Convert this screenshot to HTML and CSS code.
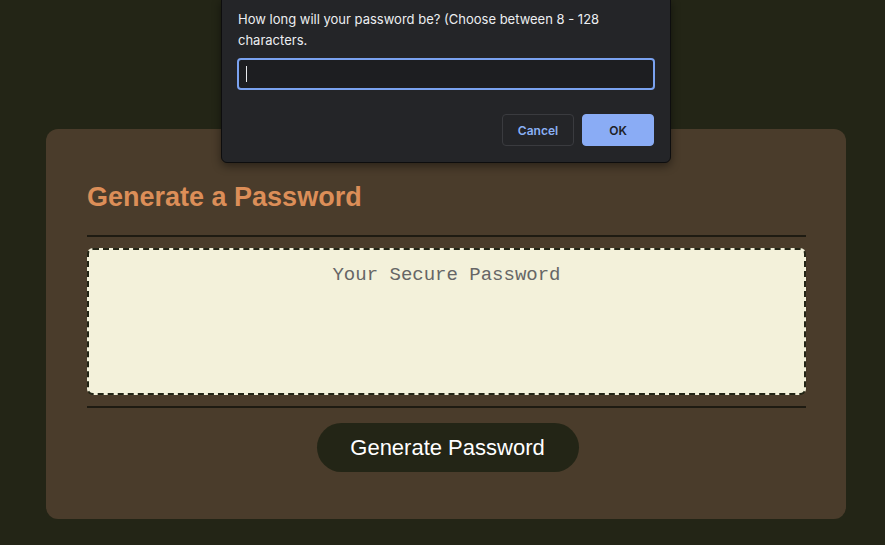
FILE: index.html
```html
<!DOCTYPE html>
<html lang="en">
<head>
<meta charset="utf-8">
<title>Password Generator</title>
<link rel="stylesheet" href="styles.css">
</head>
<body>
  <main class="page">
    <section class="card">
      <h2 class="card-title">Generate a Password</h2>
      <div class="card-body">
        <textarea class="password" readonly placeholder="Your Secure Password" aria-label="Generated Password"></textarea>
      </div>
      <div class="card-footer">
        <button class="btn-generate" type="button">Generate Password</button>
      </div>
    </section>
  </main>

  <div class="dialog" role="dialog">
    <p class="dialog-msg">How long will your password be? (Choose between 8 - 128 characters.</p>
    <div class="dialog-input"><span class="caret"></span></div>
    <div class="dialog-actions">
      <button class="dlg-btn dlg-cancel" type="button">Cancel</button>
      <button class="dlg-btn dlg-ok" type="button">OK</button>
    </div>
  </div>
</body>
</html>
```

FILE: styles.css
```css
* { box-sizing: border-box; }

html, body {
  margin: 0;
  padding: 0;
  background: #232516;
  height: 100%;
}

body {
  font-family: "Liberation Sans", Arial, sans-serif;
  overflow: hidden;
}

.page {
  padding: 129px 0 0 46px;
}

.card {
  width: 800px;
  background: #4a3c2b;
  border-radius: 12px;
  padding: 52px 40px 47px 41px;
}

.card-title {
  margin: 0 0 22px;
  font-size: 27px;
  line-height: 32px;
  font-weight: 700;
  color: #dc8e58;
}

.card-body {
  border-top: 2px solid #1e1b12;
  border-bottom: 2px solid #1e1b12;
  padding: 11px 0 11px;
}

.password {
  display: block;
  width: 100%;
  height: 147px;
  resize: none;
  background: #f3f1da;
  border: 2px dashed #232516;
  border-radius: 6px;
  padding: 14px 10px;
  font-family: "Liberation Mono", "Courier New", monospace;
  font-size: 19px;
  line-height: 22px;
  text-align: center;
  color: #555;
  outline: none;
}

.password::placeholder {
  color: #666;
  opacity: 1;
}

.card-footer {
  display: flex;
  justify-content: center;
  padding-top: 15px;
  padding-left: 2px;
}

.btn-generate {
  width: 262px;
  height: 49px;
  border: none;
  border-radius: 25px;
  background: #232516;
  color: #fff;
  font-family: "Liberation Sans", Arial, sans-serif;
  font-size: 22px;
  cursor: pointer;
}

/* prompt dialog overlay */
.dialog {
  position: absolute;
  top: -1px;
  left: 221px;
  width: 450px;
  background: #242528;
  border: 1px solid #0d0d0e;
  border-radius: 0 0 6px 6px;
  box-shadow: 0 3px 10px rgba(0, 0, 0, 0.45);
  padding: 9px 16px 16px;
  font-family: Inter, "Liberation Sans", Arial, sans-serif;
}

.dialog-msg {
  margin: 0;
  font-size: 13px;
  line-height: 21px;
  color: #eceef1;
}

.dialog-input {
  margin: 7px 0 0 -1px;
  width: 418px;
  height: 32px;
  border: 2px solid #7aa2f0;
  border-radius: 4px;
  background: #1d1e21;
  display: flex;
  align-items: center;
  padding-left: 7px;
}

.caret {
  width: 1px;
  height: 16px;
  background: #e8eaed;
}

.dialog-actions {
  display: flex;
  justify-content: flex-end;
  gap: 8px;
  margin-top: 24px;
}

.dlg-btn {
  width: 72px;
  height: 32px;
  border-radius: 4px;
  font-family: Inter, "Liberation Sans", Arial, sans-serif;
  font-size: 12px;
  font-weight: 600;
}

.dlg-cancel {
  background: #242528;
  border: 1px solid #3a3b3f;
  color: #8ab0f5;
}

.dlg-ok {
  background: #8aacf5;
  border: 1px solid #8aacf5;
  color: #202124;
}
```
